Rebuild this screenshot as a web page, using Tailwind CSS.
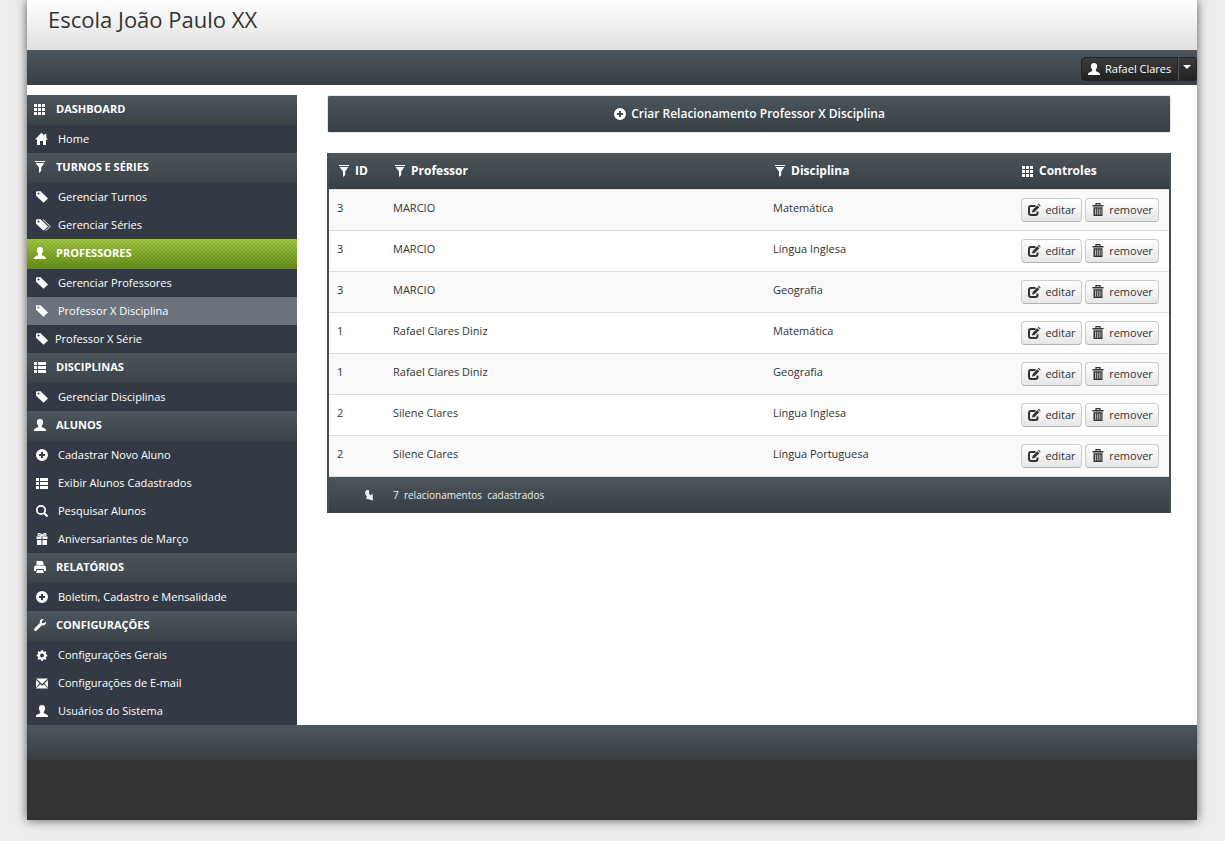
<!DOCTYPE html>
<html lang="pt-br">

<head>
  <meta charset="UTF-8">
  <meta name="viewport" content="width=device-width, initial-scale=1.0">
  <title>Escola João Paulo XX</title>
  <script src="https://cdn.jsdelivr.net/npm/@tailwindcss/browser@4"></script>
</head>

<body class="min-h-screen pb-5 bg-[#ededed] font-['Open_Sans',sans-serif] text-[11px] text-[#333]">
  <!-- Icon sprite -->
  <svg class="hidden" xmlns="http://www.w3.org/2000/svg">
    <symbol id="th" viewBox="0 0 14 14"><path d="M1 2h3v3H1zM5 2h3v3H5zM9 2h3v3H9zM1 6h3v3H1zM5 6h3v3H5zM9 6h3v3H9zM1 10h3v3H1zM5 10h3v3H5zM9 10h3v3H9z"/></symbol>
    <symbol id="home" viewBox="0 0 14 14"><path d="M6.500.8 9.500 3.800V2h1.800v3.600L13 7.500H11V13H8V9H5V13H2V7.500H0z"/></symbol>
    <symbol id="filter" viewBox="0 0 14 14"><path d="M2 1h10v1H2zM2.600 3h8.800L8.200 7.600V11L6 13V7.600z"/></symbol>
    <symbol id="tag" viewBox="0 0 14 14"><path fill-rule="evenodd" d="M1 2.200Q1 1.200 2 1.200H5.600L13 8.400 8.600 12.800 1 5.800zM3.500 2.600a1 1 0 1 0 .01 2 1 1 0 0 0 0-2z"/></symbol>
    <symbol id="tags" viewBox="0 0 17 14"><path fill-rule="evenodd" d="M0 2.200Q0 1.200 1 1.200H4.600L12 8.400 7.600 12.800 0 5.800zM2.500 2.600a1 1 0 1 0 .01 2 1 1 0 0 0 0-2z"/><path d="M7 1.600 14.200 8.400 10 12.600" fill="none" stroke="currentColor" stroke-width="1"/></symbol>
    <symbol id="user" viewBox="0 0 14 14"><path d="M7 1c2 0 3.100 1.200 3.100 3.200 0 1.600-.7 2.700-1.300 3.500v1.200c.3.700 4.200 1.300 4.200 3.300V13H1v-.8c0-2 3.900-2.600 4.200-3.300V7.700C4.600 6.900 3.900 5.800 3.900 4.200 3.900 2.200 5 1 7 1z"/></symbol>
    <symbol id="list" viewBox="0 0 14 14"><path d="M1 2h3v3H1zM5 2h8v3H5zM1 6h3v3H1zM5 6h8v3H5zM1 10h3v3H1zM5 10h8v3H5z"/></symbol>
    <symbol id="plus" viewBox="0 0 14 14"><path fill-rule="evenodd" d="M7 1a6 6 0 1 0 0 12A6 6 0 0 0 7 1zM6 4h2v2h2v2H8v2H6V8H4V6h2z"/></symbol>
    <symbol id="search" viewBox="0 0 14 14"><path d="M9 9 12.500 12.500" stroke="currentColor" stroke-width="2.200"/><circle cx="6" cy="6" r="4.200" fill="none" stroke="currentColor" stroke-width="1.800"/></symbol>
    <symbol id="gift" viewBox="0 0 14 14"><path d="M1.500 4.500h5V7h-5zM7.500 4.500h5V7h-5zM2 8h4.500v5H2zM7.500 8H12v5H7.500z"/><path d="M7 4C6 1.200 3 1 3 2.500S5 4 7 4zm0 0c1-2.800 4-3 4-1.500S9 4 7 4z" fill="none" stroke="currentColor" stroke-width="1.200"/></symbol>
    <symbol id="print" viewBox="0 0 14 14"><path d="M4 1h5l1.500 1.500V5h-7V1zM1 7l1.200-1.500h9.600L13 7v4h-1.800L10.600 9H3.400l-.6 2H1zM4 10h6l.8 3H3.200z"/></symbol>
    <symbol id="wrench" viewBox="0 0 14 14"><path d="M12.900 3.400 10.800 5.200 9 4.900 8.800 3.200 10.700 1.200C8.400.5 6.300 2.300 6.900 4.900L1.200 10.700Q.6 12 1.500 12.700t2 0L8.800 7.300c2.800.8 4.700-1.300 4.100-3.900z"/></symbol>
    <symbol id="cog" viewBox="0 0 14 14"><circle cx="7" cy="7.500" r="3.100" fill="none" stroke="currentColor" stroke-width="2.200"/><path d="M6 2.300h2v2H6zM6 10.700h2v2H6zM1.800 6.500h2v2h-2zM10.200 6.500h2v2h-2zM3.900 3 5.300 4.400 3.900 5.800 2.500 4.400zM10.100 3l1.400 1.400-1.400 1.400-1.400-1.400zM3.900 9.200l1.400 1.400L3.900 12l-1.400-1.400zM10.100 9.200l1.400 1.400-1.400 1.400-1.400-1.400z"/></symbol>
    <symbol id="envelope" viewBox="0 0 14 14"><path d="M1 2.500h12L7 8zM1 4l3.600 3.500L1 11.500zM13 4 9.400 7.500 13 11.500zM5.300 8.200 7 9.700l1.700-1.500L13 12.500H1z"/></symbol>
    <symbol id="edit" viewBox="0 0 14 14"><path d="M8.500 2.900H4Q2 2.900 2 5v5q0 2 2 2h4.500q2 0 2-2V8.500" fill="none" stroke="currentColor" stroke-width="2"/><path d="m5 9.500.6-2.600L10.300 2.200l2 2L7.600 8.900zM10.900 1.600l.8-.8 2 2-.8.8z"/></symbol>
    <symbol id="trash" viewBox="0 0 14 14"><path d="M5 2V.7h4V2" fill="none" stroke="currentColor" stroke-width="1.200"/><path d="M1.500 2h11v1.500h-11z"/><path fill-rule="evenodd" d="M2.500 4.200h9V13h-9zM4 5.500v6.300h.7V5.500zm1.900 0v6.300h.7V5.500zm1.900 0v6.300h.7V5.500zm1.900 0v6.300h.6V5.500z"/></symbol>
    <symbol id="arrow" viewBox="0 0 14 14"><path d="M4.500 1C2.500 2.500 2.700 5.500 5.200 7.800L3.700 9.500 11 11.500 10.600 4.800 8.600 6.300C6.700 5 6.500 3 7.500 1.500z"/></symbol>
  </svg>

  <div class="ml-[27px] mr-7 bg-white shadow-[0_0_10px_#555]">
    <header class="h-[50px] bg-linear-to-b from-white to-[#e0e0e0] px-[21px] pt-1">
      <h1 class="text-[22px] leading-[30px]">Escola João Paulo XX</h1>
    </header>

    <!-- Top bar -->
    <div class="h-[35px] bg-linear-to-b from-[#4d565c] to-[#373e45] flex justify-end items-center pt-0.5 text-white">
      <div class="flex h-6">
        <button type="button" class="flex items-center gap-1 w-[97px] pl-[5px] pt-px rounded-l border border-[#222] bg-linear-to-b from-[#3c3c3c] to-[#222] whitespace-nowrap">
          <svg class="size-3.5 fill-current shrink-0"><use href="#user"/></svg>Rafael Clares</button>
        <button type="button" aria-label="Menu do usuário" class="w-[19px] pl-1 pb-1 rounded-r border border-l-[#555] border-[#222] bg-linear-to-b from-[#3c3c3c] to-[#222]">
          <svg class="w-2 h-1 fill-current" viewBox="0 0 8 4"><path d="M0 0h8L4 4z"/></svg>
        </button>
      </div>
    </div>

    <div class="flex pt-2.5">
      <!-- Sidebar -->
      <nav class="w-[270px] shrink-0 bg-[#343a45] text-white">
        <h2 class="h-[30px] flex items-center gap-[9px] pl-1.5 pb-0.5 font-bold bg-linear-to-b from-[#4d565c] to-[#3b4248]"><svg class="size-3.5 fill-current"><use href="#th"/></svg>DASHBOARD</h2>
        <a href="#" class="h-7 flex items-center gap-[9px] pl-2"><svg class="size-3.5 fill-current"><use href="#home"/></svg>Home</a>

        <h2 class="h-[30px] flex items-center gap-[9px] pl-1.5 pb-0.5 font-bold bg-linear-to-b from-[#4d565c] to-[#3b4248]"><svg class="size-3.5 fill-current"><use href="#filter"/></svg>TURNOS E SÉRIES</h2>
        <a href="#" class="h-7 flex items-center gap-[9px] pl-2"><svg class="size-3.5 fill-current"><use href="#tag"/></svg>Gerenciar Turnos</a>
        <a href="#" class="h-7 flex items-center gap-[5px] pl-[9px]"><svg class="w-[17px] h-3.5 fill-current"><use href="#tags"/></svg>Gerenciar Séries</a>

        <h2 class="h-[30px] bg-linear-to-b from-[#a0c940] to-[#668f16] font-bold">
          <span class="h-full flex items-center gap-[9px] pl-1.5 pb-0.5 bg-[repeating-conic-gradient(#00000014_0_25%,transparent_0_50%)] bg-size-[4px_4px]"><svg class="size-3.5 fill-current"><use href="#user"/></svg>PROFESSORES</span>
        </h2>
        <a href="#" class="h-7 flex items-center gap-[9px] pl-2"><svg class="size-3.5 fill-current"><use href="#tag"/></svg>Gerenciar Professores</a>
        <a href="#" class="h-7 flex items-center gap-[9px] pl-2 bg-[#6d737c]"><svg class="size-3.5 fill-current"><use href="#tag"/></svg>Professor X Disciplina</a>
        <a href="#" class="h-7 flex items-center gap-1.5 pl-2"><svg class="size-3.5 fill-current"><use href="#tag"/></svg>Professor X Série</a>

        <h2 class="h-[30px] flex items-center gap-[9px] pl-1.5 pb-0.5 font-bold bg-linear-to-b from-[#4d565c] to-[#3b4248]"><svg class="size-3.5 fill-current"><use href="#list"/></svg>DISCIPLINAS</h2>
        <a href="#" class="h-7 flex items-center gap-[9px] pl-2"><svg class="size-3.5 fill-current"><use href="#tag"/></svg>Gerenciar Disciplinas</a>

        <h2 class="h-[30px] flex items-center gap-[9px] pl-1.5 pb-0.5 font-bold bg-linear-to-b from-[#4d565c] to-[#3b4248]"><svg class="size-3.5 fill-current"><use href="#user"/></svg>ALUNOS</h2>
        <a href="#" class="h-7 flex items-center gap-[9px] pl-2"><svg class="size-3.5 fill-current"><use href="#plus"/></svg>Cadastrar Novo Aluno</a>
        <a href="#" class="h-7 flex items-center gap-[9px] pl-2"><svg class="size-3.5 fill-current"><use href="#list"/></svg>Exibir Alunos Cadastrados</a>
        <a href="#" class="h-7 flex items-center gap-[9px] pl-2"><svg class="size-3.5 fill-current"><use href="#search"/></svg>Pesquisar Alunos</a>
        <a href="#" class="h-7 flex items-center gap-[9px] pl-2"><svg class="size-3.5 fill-current"><use href="#gift"/></svg>Aniversariantes de Março</a>

        <h2 class="h-[30px] flex items-center gap-[9px] pl-1.5 pb-0.5 font-bold bg-linear-to-b from-[#4d565c] to-[#3b4248]"><svg class="size-3.5 fill-current"><use href="#print"/></svg>RELATÓRIOS</h2>
        <a href="#" class="h-7 flex items-center gap-[9px] pl-2"><svg class="size-3.5 fill-current"><use href="#plus"/></svg>Boletim, Cadastro e Mensalidade</a>

        <h2 class="h-[30px] flex items-center gap-[9px] pl-1.5 pb-0.5 font-bold bg-linear-to-b from-[#4d565c] to-[#3b4248]"><svg class="size-3.5 fill-current"><use href="#wrench"/></svg>CONFIGURAÇÕES</h2>
        <a href="#" class="h-7 flex items-center gap-[9px] pl-2"><svg class="size-3.5 fill-current"><use href="#cog"/></svg>Configurações Gerais</a>
        <a href="#" class="h-7 flex items-center gap-[9px] pl-2"><svg class="size-3.5 fill-current"><use href="#envelope"/></svg>Configurações de E-mail</a>
        <a href="#" class="h-7 flex items-center gap-[9px] pl-2"><svg class="size-3.5 fill-current"><use href="#user"/></svg>Usuários do Sistema</a>
      </nav>

      <!-- Content -->
      <main class="flex-1 pl-[30px] pr-[26px]">
        <button type="button" class="w-full h-[38px] flex items-center justify-center gap-1 border border-[#e3e6e8] rounded-xs bg-linear-to-b from-[#4d565c] to-[#373e45] text-[12px] font-semibold text-white">
          <svg class="size-3.5 fill-current"><use href="#plus"/></svg>Criar Relacionamento Professor X Disciplina</button>

        <table class="mt-5 w-full table-fixed border-x-2 border-[#454e55]">
          <thead>
            <tr class="h-9 bg-linear-to-b from-[#4d565c] to-[#373e45] text-left text-[12px] text-white">
              <th class="w-[57px] pl-2"><span class="flex items-center gap-1"><svg class="size-3.5 fill-current"><use href="#filter"/></svg>ID</span></th>
              <th class="w-[380px] pl-2"><span class="flex items-center gap-1"><svg class="size-3.5 fill-current"><use href="#filter"/></svg>Professor</span></th>
              <th class="pl-2"><span class="flex items-center gap-1"><svg class="size-3.5 fill-current"><use href="#filter"/></svg>Disciplina</span></th>
              <th class="w-[157px] pl-2"><span class="flex items-center gap-1"><svg class="size-3.5 fill-current"><use href="#th"/></svg>Controles</span></th>
            </tr>
          </thead>
          <tbody id="rows"></tbody>
          <tfoot>
            <tr class="h-[37px] border-t border-[#ddd] bg-linear-to-b from-[#4d565c] to-[#373e45] text-[10px] text-[#eee]">
              <td class="pl-[33px] pt-0.5"><svg class="size-3.5 fill-current"><use href="#arrow"/></svg></td>
              <td colspan="3" class="pl-2 pt-0.5 whitespace-pre">7  relacionamentos  cadastrados</td>
            </tr>
          </tfoot>
        </table>
      </main>
    </div>

    <footer>
      <div class="h-[35px] bg-linear-to-b from-[#4d565c] to-[#373e45]"></div>
      <div class="h-[60px] bg-[#333]"></div>
    </footer>
  </div>

  <script>
    const rows = [
      [3, 'MARCIO', 'Matemática'],
      [3, 'MARCIO', 'Língua Inglesa'],
      [3, 'MARCIO', 'Geografia'],
      [1, 'Rafael Clares Diniz', 'Matemática'],
      [1, 'Rafael Clares Diniz', 'Geografia'],
      [2, 'Silene Clares', 'Língua Inglesa'],
      [2, 'Silene Clares', 'Língua Portuguesa'],
    ];

    document.getElementById('rows').innerHTML = rows.map(([id, professor, disciplina]) => `
      <tr class="h-[41px] border-t border-[#ddd] odd:bg-[#f9f9f9] align-top leading-5">
        <td class="pl-2 pt-2">${id}</td>
        <td class="pl-2 pt-2">${professor}</td>
        <td class="pl-2 pt-2">${disciplina}</td>
        <td class="pl-2 pt-2">
          <div class="flex gap-[3px]">
            <button type="button" class="h-6 w-[61px] flex items-center justify-center gap-1 rounded border border-[#ccc] border-b-[#b3b3b3] bg-linear-to-b from-white to-[#e6e6e6]"><svg class="size-3.5 fill-current"><use href="#edit"/></svg>editar</button>
            <button type="button" class="h-6 w-[74px] flex items-center justify-center gap-1 rounded border border-[#ccc] border-b-[#b3b3b3] bg-linear-to-b from-white to-[#e6e6e6]"><svg class="size-3.5 fill-current"><use href="#trash"/></svg>remover</button>
          </div>
        </td>
      </tr>`).join('');
  </script>
</body>

</html>
